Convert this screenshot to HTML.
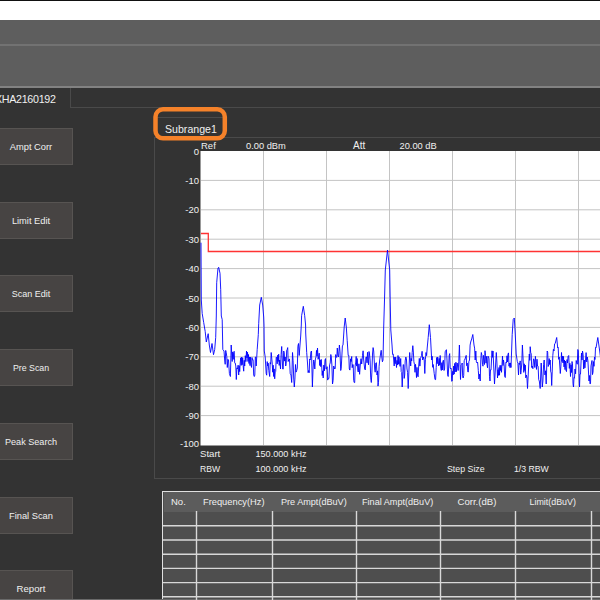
<!DOCTYPE html>
<html><head><meta charset="utf-8"><style>
*{margin:0;padding:0;box-sizing:border-box}
html{overflow:hidden;width:600px;height:600px}
body{width:600px;height:600px;overflow:hidden;background:#333333;position:relative;font-family:"Liberation Sans", sans-serif;color:#e8e8e8}
.a{position:absolute}
.btn{position:absolute;left:-4px;width:77px;height:37px;background:#474443;border:1px solid #575452;font-size:9.3px;line-height:36px;text-align:center;padding-right:7px;white-space:nowrap;color:#f0f0f0}
.yl{position:absolute;left:170px;width:29px;text-align:right;font-size:9.5px;line-height:12px;color:#f0f0f0}
.t{position:absolute;white-space:nowrap;font-size:9px;line-height:12px;color:#f0f0f0}
</style></head><body>
<div class="a" style="left:0;top:0;width:600px;height:1px;background:#111"></div>
<div class="a" style="left:0;top:1px;width:600px;height:19px;background:#fff"></div>
<div class="a" style="left:0;top:20px;width:600px;height:66px;background:#5e5e5e"></div>
<div class="a" style="left:0;top:44px;width:600px;height:2px;background:#727272"></div>
<div class="a" style="left:0;top:86px;width:600px;height:2px;background:#828282"></div>
<!-- tab bar -->
<div class="a" style="left:70px;top:88px;width:530px;height:20px;border-left:1px solid #4a4a4a;border-bottom:1px solid #4a4a4a"></div>
<div class="t" style="left:-5px;top:93px;font-size:10.7px;letter-spacing:-0.3px">XHA2160192</div>
<div class="btn" style="top:128px;font-size:9.3px">Ampt Corr</div><div class="btn" style="top:202px;font-size:9.3px">Limit Edit</div><div class="btn" style="top:275px;font-size:9.0px">Scan Edit</div><div class="btn" style="top:349px;font-size:8.8px">Pre Scan</div><div class="btn" style="top:423px;font-size:9.1px">Peak Search</div><div class="btn" style="top:497px;font-size:9.3px">Final Scan</div><div class="btn" style="top:570px;font-size:9.6px">Report</div>
<!-- chart panel -->
<div class="a" style="left:154px;top:137px;width:450px;height:342px;border-left:1px solid #4a4a4a;border-top:1px solid #4a4a4a;border-bottom:1px solid #4a4a4a"></div>
<div class="a" style="left:155px;top:117px;width:70px;height:21px;border-top:1px solid #4a4a4a"></div>
<div class="t" style="left:165px;top:122.5px;font-size:10.6px">Subrange1</div>
<!-- table -->
<div class="a" style="left:162px;top:490.5px;width:450px;height:120px;background:#4e4e4e;border:1.5px solid #e0e0e0"></div>
<div class="a" style="left:163.5px;top:492px;width:448px;height:20px;background:#5c5c5c"></div>
<div class="a" style="left:0;top:599px;width:600px;height:1px;background:#6a6a6a"></div>
<div class="t" style="left:171px;top:496px;font-size:9.5px">No.</div>
<div class="t" style="left:203px;top:496px;font-size:9.3px">Frequency(Hz)</div>
<div class="t" style="left:281px;top:496px;font-size:9.1px">Pre Ampt(dBuV)</div>
<div class="t" style="left:362px;top:496px;font-size:9.1px">Final Ampt(dBuV)</div>
<div class="t" style="left:457.5px;top:496px;font-size:9.6px">Corr.(dB)</div>
<div class="t" style="left:529.5px;top:496px;font-size:8.9px">Limit(dBuV)</div>
<svg class="a" style="left:0;top:0" width="600" height="600">
<rect x="200.5" y="151" width="400" height="294.5" fill="#fff"/>
<g stroke="#c4c4c4" stroke-width="1.0"><line x1="263.5" y1="151" x2="263.5" y2="445"/><line x1="326.5" y1="151" x2="326.5" y2="445"/><line x1="389.5" y1="151" x2="389.5" y2="445"/><line x1="452.5" y1="151" x2="452.5" y2="445"/><line x1="515.5" y1="151" x2="515.5" y2="445"/><line x1="578.5" y1="151" x2="578.5" y2="445"/><line x1="201" y1="180.4" x2="600" y2="180.4"/><line x1="201" y1="209.8" x2="600" y2="209.8"/><line x1="201" y1="239.2" x2="600" y2="239.2"/><line x1="201" y1="268.6" x2="600" y2="268.6"/><line x1="201" y1="298.0" x2="600" y2="298.0"/><line x1="201" y1="327.4" x2="600" y2="327.4"/><line x1="201" y1="356.8" x2="600" y2="356.8"/><line x1="201" y1="386.2" x2="600" y2="386.2"/><line x1="201" y1="415.6" x2="600" y2="415.6"/></g>
<polyline points="201,233.5 208.3,233.5 208.3,251.5 600,251.5" fill="none" stroke="#ff3333" stroke-width="1.3"/>
<polyline points="201.0,242.7 201.3,300.0 202.2,313.5 203.7,322.5 205.2,331.5 206.3,342.0 208.2,333.7 209.3,345.0 210.5,352.5 212.0,343.5 213.5,354.7 214.7,349.5 215.7,337.5 216.3,316.0 216.7,282.7 218.0,268.0 218.7,267.3 220.0,273.3 220.7,289.3 221.3,316.0 222.2,319.5 222.8,349.5 224.0,351.0 224.7,360.0 225.2,364.3 225.7,350.4 226.2,352.5 226.8,356.7 227.3,367.5 227.9,359.3 228.5,360.0 229.4,373.5 230.4,376.5 231.2,345.0 232.2,361.5 232.7,351.9 233.2,359.4 233.7,352.5 234.2,351.3 234.7,362.8 235.2,363.0 235.8,366.0 236.3,379.5 236.9,367.9 237.5,369.0 238.1,365.2 238.7,375.0 239.2,365.7 239.7,371.6 240.2,363.0 240.7,357.8 241.2,365.4 241.7,357.0 242.2,364.7 242.7,357.8 243.2,366.0 243.7,371.2 244.2,360.3 244.7,366.0 245.3,355.7 245.9,361.6 246.5,351.0 247.0,357.9 247.5,352.2 248.0,361.5 248.5,354.5 249.0,363.5 249.5,357.0 250.0,365.6 250.5,357.1 251.0,364.5 251.5,367.4 252.0,357.5 252.5,360.0 253.1,359.7 253.7,375.0 254.3,376.5 254.8,375.1 255.3,357.0 255.8,357.0 256.2,366.0 257.2,349.5 258.3,334.5 258.7,323.7 259.7,305.0 261.3,297.3 262.7,305.0 263.7,317.0 264.0,325.0 264.3,351.0 265.2,357.0 266.2,373.5 266.7,375.2 267.2,361.6 267.7,366.0 268.2,363.2 268.8,370.5 269.7,376.5 270.2,362.5 270.7,364.1 271.2,352.5 272.2,363.0 272.7,372.2 273.2,365.2 273.7,376.5 274.2,368.9 274.7,378.8 275.2,372.0 275.7,371.4 276.2,357.6 276.7,357.0 277.2,363.8 277.7,355.2 278.2,361.5 278.7,354.2 279.2,365.4 279.7,360.0 280.5,369.0 281.1,354.5 281.7,346.5 282.7,369.0 283.2,369.1 283.7,351.0 284.2,352.5 284.7,361.1 285.2,357.0 285.7,366.0 286.2,363.6 286.7,350.2 287.2,349.5 287.7,347.6 288.2,361.5 288.7,360.0 289.5,358.9 290.2,373.5 291.0,375.0 291.7,382.5 292.5,352.5 293.1,360.7 293.7,378.0 294.3,387.0 294.9,379.1 295.5,364.5 296.1,372.1 296.7,370.5 297.3,368.0 297.9,346.2 298.5,343.5 299.2,355.5 300.7,336.0 301.3,325.0 301.6,315.7 303.3,306.3 304.7,315.7 305.6,325.0 305.7,333.0 306.7,352.5 307.5,363.0 308.1,372.6 308.7,370.5 309.2,372.7 309.7,359.0 310.2,360.0 310.9,351.9 311.5,351.0 312.4,387.0 313.0,369.9 313.7,360.0 314.2,361.5 314.8,369.0 315.4,358.9 316.0,357.0 316.5,350.4 317.0,356.1 317.5,348.0 318.1,359.3 318.7,357.0 319.2,353.2 319.7,365.5 320.2,360.0 320.7,366.6 321.2,359.4 321.7,366.0 322.2,375.5 322.7,370.8 323.2,378.0 323.8,365.1 324.4,370.8 325.0,360.0 325.5,358.6 326.0,369.2 326.5,369.0 327.1,366.7 327.7,380.1 328.3,378.0 328.9,378.5 329.6,364.7 330.2,363.0 330.8,354.5 331.3,357.0 331.9,365.0 332.5,384.0 333.1,380.4 333.7,366.0 334.7,369.0 335.2,368.5 335.7,354.6 336.2,357.0 336.8,357.4 337.3,348.0 337.9,355.8 338.5,357.0 339.4,345.0 340.0,351.8 340.7,370.5 341.2,368.7 341.8,357.0 342.4,345.9 343.0,345.0 344.2,327.0 345.2,318.0 346.3,327.0 347.2,340.5 348.2,355.5 348.8,355.4 349.3,369.0 349.9,370.1 350.6,358.8 351.2,361.5 351.7,356.5 352.2,367.7 352.7,364.5 353.2,364.7 353.7,380.5 354.2,382.5 354.7,382.6 355.2,365.1 355.7,363.0 356.2,356.4 356.7,366.1 357.2,358.5 357.8,370.8 358.3,372.0 358.9,363.8 359.6,374.3 360.2,366.0 361.0,358.7 361.7,364.0 362.5,355.5 363.1,350.8 363.7,360.0 364.7,369.0 365.3,369.9 365.9,357.2 366.5,357.0 367.0,362.8 367.5,352.3 368.0,360.0 368.5,364.8 369.0,351.5 369.5,354.0 370.1,360.1 370.7,377.9 371.3,382.5 371.9,372.1 372.5,354.0 373.1,347.6 373.7,351.0 374.7,369.0 375.2,372.2 375.8,363.0 376.4,362.7 377.0,375.0 377.5,370.9 378.0,386.1 378.5,382.5 379.1,366.3 379.7,360.0 380.7,353.0 381.2,350.3 381.8,357.0 382.4,361.8 383.0,360.0 383.7,327.0 384.5,300.0 385.3,270.0 387.5,250.0 389.7,270.0 390.2,300.0 390.8,330.0 392.0,345.0 392.6,354.4 393.2,354.0 394.2,366.0 394.7,357.1 395.2,363.7 395.7,357.0 396.5,367.5 397.0,360.4 397.5,364.9 398.0,355.5 398.5,364.2 399.0,356.9 399.5,363.0 400.1,366.4 400.7,358.5 401.2,371.6 401.7,372.3 402.2,387.0 403.2,364.5 403.7,364.9 404.2,378.4 404.7,375.0 405.2,360.9 405.8,357.0 406.4,358.3 407.0,369.0 407.6,372.4 408.2,388.5 409.7,352.5 410.7,366.0 411.2,358.4 411.7,360.9 412.2,352.5 412.8,345.7 413.3,351.0 413.9,361.8 414.5,364.5 415.0,372.3 415.5,364.3 416.0,369.0 416.5,377.6 417.0,367.4 417.5,375.0 418.1,376.8 418.7,366.0 419.3,358.4 419.9,366.1 420.5,358.5 421.5,355.5 422.1,351.3 422.7,360.0 423.7,357.0 424.2,359.8 424.8,373.5 425.4,359.3 426.0,352.5 426.6,355.7 427.2,348.0 428.2,337.5 429.3,324.7 430.5,337.5 431.7,360.0 432.2,356.3 432.7,367.3 433.2,364.5 434.2,373.5 435.0,379.5 435.6,379.6 436.2,367.5 436.7,357.5 437.2,363.7 437.7,357.0 438.7,366.0 439.2,358.4 439.7,365.1 440.2,355.5 440.8,368.2 441.3,370.5 441.8,362.7 442.3,370.0 442.8,361.5 443.4,360.2 444.0,370.5 444.6,369.0 445.2,351.3 445.8,351.0 446.4,349.7 447.0,360.0 447.6,374.9 448.2,376.5 449.2,355.5 449.7,353.6 450.2,368.0 450.7,369.0 451.2,368.4 451.7,381.3 452.2,381.0 452.7,371.3 453.2,374.9 453.7,366.0 454.2,374.1 454.7,363.4 455.2,372.0 455.9,362.2 456.5,371.6 457.2,363.0 458.2,370.5 458.8,361.3 459.4,345.0 460.5,379.5 461.1,365.1 461.7,364.5 462.2,363.0 462.7,376.9 463.2,378.0 463.7,375.7 464.2,360.3 464.7,360.0 465.7,357.0 466.2,355.4 466.7,365.7 467.2,363.0 467.8,371.9 468.3,372.0 468.9,361.6 469.5,360.0 470.1,345.1 470.7,342.0 471.7,339.0 472.8,334.5 474.0,345.0 474.6,348.1 475.2,360.0 475.8,351.0 476.4,361.8 477.0,363.0 477.6,362.2 478.3,370.5 478.9,379.0 479.6,374.2 480.2,381.0 480.8,359.9 481.3,352.5 481.9,355.2 482.5,364.5 483.0,366.2 483.5,355.4 484.0,360.0 484.5,364.5 485.0,350.7 485.5,355.5 486.0,363.1 486.5,356.4 487.0,364.5 487.5,367.8 488.0,356.1 488.5,357.0 489.0,358.8 489.5,376.7 490.0,381.0 490.5,369.9 491.0,370.1 491.5,360.0 492.0,350.8 492.5,357.3 493.0,351.0 494.5,384.0 496.3,352.5 496.9,362.0 497.5,378.0 498.0,369.7 498.5,375.4 499.0,367.5 499.5,375.2 500.0,365.4 500.5,370.5 501.0,365.3 501.5,372.3 502.0,364.5 502.5,356.1 503.0,365.5 503.5,360.0 504.1,364.4 504.7,376.5 505.3,377.5 505.9,362.4 506.5,363.0 507.0,355.8 507.5,362.0 508.0,354.0 508.5,352.9 509.0,366.2 509.5,363.0 510.0,367.6 510.5,362.9 511.0,367.5 512.2,334.5 513.2,319.5 514.3,318.0 515.2,333.0 516.2,354.0 517.3,361.5 517.9,363.2 518.5,375.0 519.1,363.0 519.7,364.5 520.2,360.9 520.7,374.1 521.2,370.5 521.8,362.9 522.4,345.0 523.3,363.0 523.8,372.4 524.3,363.8 524.8,370.5 525.3,365.1 525.8,377.9 526.3,375.0 526.9,377.1 527.5,388.5 529.3,354.0 529.8,360.4 530.2,346.7 530.7,352.5 531.2,353.7 531.7,367.5 532.2,366.0 532.9,368.7 533.5,358.8 534.2,360.0 534.8,367.5 535.4,356.3 536.0,363.0 536.5,369.4 537.0,359.2 537.5,366.0 538.1,366.2 538.7,379.6 539.3,381.0 540.2,388.5 541.2,363.0 542.3,387.0 542.9,381.0 543.6,364.5 544.2,360.0 544.9,374.9 545.5,370.8 546.2,384.0 547.2,351.0 547.7,352.4 548.2,366.5 548.7,364.5 549.2,358.6 549.7,364.5 550.2,360.0 550.7,371.8 551.2,372.9 551.7,385.5 552.8,355.5 553.4,349.3 554.0,351.0 554.6,343.9 555.2,343.5 556.7,337.5 557.7,348.0 558.2,347.4 558.7,359.3 559.2,357.0 560.3,373.5 560.9,366.1 561.5,352.5 562.0,361.5 562.5,356.2 563.0,363.0 563.5,356.4 564.0,366.9 564.5,360.0 565.0,369.6 565.5,361.1 566.0,370.5 566.5,371.6 567.0,359.6 567.5,363.0 568.1,356.1 568.7,355.5 569.3,368.4 569.9,363.3 570.5,376.5 571.0,364.9 571.5,372.5 572.0,361.5 572.5,363.7 573.0,383.8 573.5,387.0 574.0,377.7 574.5,378.2 575.0,369.0 575.6,373.8 576.2,360.5 576.8,363.0 577.3,364.2 577.8,349.5 578.3,351.0 579.5,387.0 580.0,374.0 580.5,374.0 581.0,363.0 581.5,353.0 582.0,360.0 582.5,351.0 583.1,354.4 583.7,369.0 584.3,360.0 584.9,367.9 585.5,360.0 586.1,352.6 586.7,361.9 587.3,357.0 587.9,360.6 588.5,372.0 589.0,381.0 589.5,375.5 590.0,384.0 590.5,383.6 591.0,365.9 591.5,363.0 592.0,360.5 592.5,374.6 593.0,372.0 593.5,361.6 594.0,366.3 594.5,357.0 595.0,359.5 595.5,347.5 596.0,348.0 597.8,337.5 599.7,351.0 600.5,357.2 601.2,352.9 602.0,360.0" fill="none" stroke="#0000ff" stroke-width="0.9" stroke-linejoin="round"/>
<g stroke="#d8d8d8" stroke-width="1.4"><line x1="196.5" y1="511" x2="196.5" y2="600"/><line x1="272.5" y1="511" x2="272.5" y2="600"/><line x1="356.5" y1="511" x2="356.5" y2="600"/><line x1="440.5" y1="511" x2="440.5" y2="600"/><line x1="515.5" y1="511" x2="515.5" y2="600"/><line x1="591.5" y1="511" x2="591.5" y2="600"/><line x1="163" y1="525.8" x2="600" y2="525.8"/><line x1="163" y1="540.0" x2="600" y2="540.0"/><line x1="163" y1="554.2" x2="600" y2="554.2"/><line x1="163" y1="568.4" x2="600" y2="568.4"/><line x1="163" y1="582.6" x2="600" y2="582.6"/><line x1="163" y1="596.8" x2="600" y2="596.8"/></g>
<rect x="155.5" y="109.3" width="69.3" height="29" rx="7.5" ry="7.5" fill="none" stroke="#f5822a" stroke-width="4.5"/>
</svg>
<div class="yl" style="top:145.5px">0</div><div class="yl" style="top:174.9px">-10</div><div class="yl" style="top:204.3px">-20</div><div class="yl" style="top:233.7px">-30</div><div class="yl" style="top:263.1px">-40</div><div class="yl" style="top:292.5px">-50</div><div class="yl" style="top:321.9px">-60</div><div class="yl" style="top:351.3px">-70</div><div class="yl" style="top:380.7px">-80</div><div class="yl" style="top:410.1px">-90</div><div class="yl" style="top:437.5px">-100</div>
<div class="t" style="left:201px;top:140px;font-size:9.5px">Ref</div>
<div class="t" style="left:246px;top:140px;font-size:9.3px">0.00 dBm</div>
<div class="t" style="left:353px;top:140px;font-size:10px">Att</div>
<div class="t" style="left:399.5px;top:140px;font-size:9.3px">20.00 dB</div>
<div class="t" style="left:200px;top:448px;font-size:9.6px">Start</div>
<div class="t" style="left:255.5px;top:448px;font-size:9.1px">150.000 kHz</div>
<div class="t" style="left:200px;top:463px;font-size:8.6px">RBW</div>
<div class="t" style="left:255.5px;top:463px;font-size:9.1px">100.000 kHz</div>
<div class="t" style="left:447px;top:463px;font-size:8.8px">Step Size</div>
<div class="t" style="left:514px;top:463px;font-size:8.7px">1/3 RBW</div>
</body></html>
